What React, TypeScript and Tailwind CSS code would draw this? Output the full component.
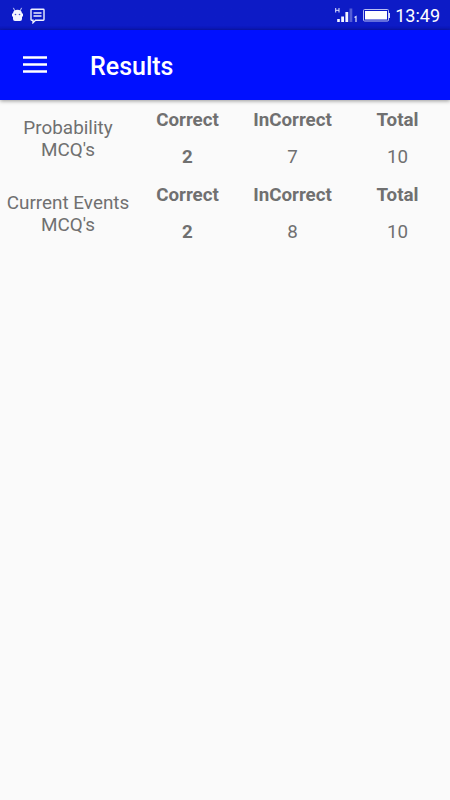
type Result = {
  quiz: string;
  correct: number;
  incorrect: number;
  total: number;
};

const results: Result[] = [
  { quiz: "Probability MCQ's", correct: 2, incorrect: 7, total: 10 },
  { quiz: "Current Events MCQ's", correct: 2, incorrect: 8, total: 10 }
];

export default function App() {
  return (
    <div className="flex min-h-screen flex-col bg-[#fafafa] font-['Roboto',sans-serif] text-[#707070]">
      <StatusBar />
      <header className="flex h-[70px] items-center bg-[#0010ff] pl-[23px] text-white shadow-[0_1px_4px_rgba(0,0,0,0.4)]">
        <button type="button" aria-label="Menu" className="block">
          <MenuIcon />
        </button>
        <h1 className="ml-[43px] pt-[3px] text-[25px] leading-[30px] font-medium">Results</h1>
      </header>
      <main className="pt-px">
        {results.map((result) => (
          <ResultRow key={result.quiz} result={result} />
        ))}
      </main>
    </div>
  );
}

function StatusBar() {
  return (
    <div className="flex h-[30px] items-center bg-linear-to-b from-[#0d1bc6] from-85% to-[#0b16b4] pr-[10px] pl-[11px] text-white">
      <DroidIcon />
      <MessageIcon />
      <div className="ml-auto flex items-center">
        <SignalIcon />
        <BatteryIcon />
        <span className="ml-[5px] pt-[2px] text-[18px] leading-5">13:49</span>
      </div>
    </div>
  );
}

function ResultRow({ result }: { result: Result }) {
  return (
    <section className="grid h-[75px] grid-cols-[135px_105px_105px_105px] text-center text-[18.75px] leading-[22px]">
      <div className="flex items-center justify-center">
        <p className="w-[130px] pl-px text-[18.9px]">{result.quiz}</p>
      </div>
      <Score label="Correct" value={result.correct} strong />
      <Score label="InCorrect" value={result.incorrect} />
      <Score label="Total" value={result.total} />
    </section>
  );
}

type ScoreProps = {
  label: string;
  value: number;
  strong?: boolean;
};

function Score({ label, value, strong = false }: ScoreProps) {
  return (
    <div className="grid grid-rows-2 items-center">
      <p className="font-bold">{label}</p>
      <p className={strong ? "font-bold" : "font-normal"}>{value}</p>
    </div>
  );
}

function MenuIcon() {
  return (
    <svg width="24" height="18" viewBox="0 0 24 18" fill="currentColor">
      <path d="M0 .2h24v2.600H0zM0 7.200h24v2.600H0zM0 14.200h24v2.600H0z" />
    </svg>
  );
}

function DroidIcon() {
  return (
    <svg width="13" height="16" viewBox="0 0 13 16">
      <path
        d="M2.600 1.200l1 2.300M10.400 1.200l-1 2.300"
        stroke="#c9cef8"
        strokeWidth="1"
        strokeLinecap="round"
      />
      <path
        d="M2 6.500C2 4 3.800 2.800 6.500 2.800S11 4 11 6.500h1v3h-1v2.500q0 2-2 2H4q-2 0-2-2V9.500H1v-3z"
        fill="#f4f5ff"
      />
      <circle cx="4.500" cy="7.500" r="0.800" fill="#4650cf" />
      <circle cx="8.500" cy="7.500" r="0.800" fill="#4650cf" />
    </svg>
  );
}

function MessageIcon() {
  return (
    <svg
      className="mt-px ml-[6px]"
      width="15"
      height="16"
      viewBox="0 0 15 16"
      fill="none"
      stroke="#eef0ff"
      strokeWidth="1.4"
    >
      <path d="M1.700 1.200h11.600q.7 0 .7.700v9.600q0 .700-.7.700H5.500L3 14.700V12.200H1.700q-.7 0-.7-.7V1.900q0-.7.7-.7z" />
      <path d="M3.500 5h8M3.500 8h8" />
    </svg>
  );
}

// Network type, three lit bars, one unlit bar and the SIM number
function SignalIcon() {
  return (
    <svg width="23" height="16" viewBox="0 0 23 16" fill="#f4f5ff">
      <path d="M.7 1v4.500M4 1v4.500M.7 3.300H4" stroke="#dfe2ff" fill="none" />
      <path d="M2.200 12h2.600v3H2.200zM6.200 9.500H9V15H6.200zM10.400 5h2.800v10h-2.800z" />
      <path d="M14.500 1.500h2.800V15h-2.800z" opacity="0.3" />
      <path d="M19.500 10.500l1.500-1V15" stroke="#dfe2ff" strokeWidth="1.2" fill="none" />
    </svg>
  );
}

function BatteryIcon() {
  return (
    <svg className="ml-[5px]" width="27" height="13" viewBox="0 0 27 13">
      <rect x="0.500" y="0.500" width="25" height="11.500" rx="1" fill="none" stroke="#b9bff2" />
      <path d="M2 2h22v8.500H2z" fill="#fff" />
      <path d="M25.500 4H27v5h-1.500z" fill="#dfe2ff" />
    </svg>
  );
}
